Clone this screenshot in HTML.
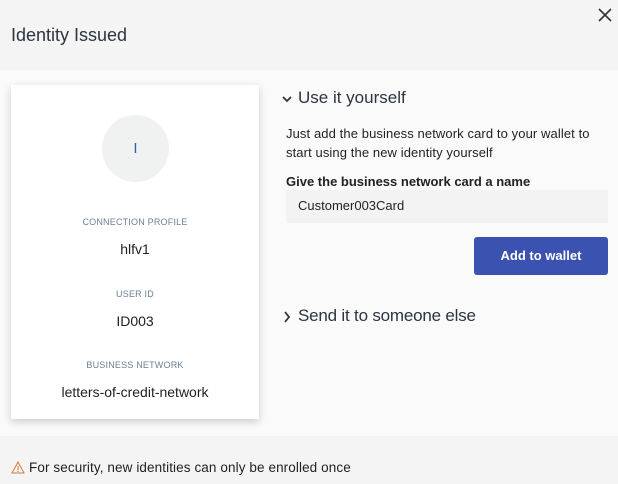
<!DOCTYPE html>
<html><head><style>
*{margin:0;padding:0;box-sizing:border-box}
body{width:618px;height:484px;overflow:hidden;font-family:"Liberation Sans",sans-serif;background:#fafafa;position:relative;color:#222}
.hdr{position:absolute;left:0;top:0;width:618px;height:70px;background:#f4f4f4}
.ftr{position:absolute;left:0;top:436px;width:618px;height:48px;background:#f4f4f4}
.abs{position:absolute;white-space:nowrap}
.card{position:absolute;left:11px;top:85px;width:248px;height:334px;background:#fff;box-shadow:0 3px 8px rgba(0,0,0,.18)}
.circ{position:absolute;left:102px;top:115px;width:67px;height:67px;border-radius:50%;background:#f0f1f1;color:#3d5ab0;text-align:center;line-height:67px;font-size:15px}
.lbl{position:absolute;left:11px;width:248px;text-align:center;font-size:9px;color:#6b7f96;letter-spacing:.2px}
.val{position:absolute;left:11px;width:248px;text-align:center;font-size:14px;color:#222}
</style></head><body>
<div class="hdr"></div><div class="ftr"></div>
<div class="abs" style="left:11px;top:25px;font-size:18px;color:#2d3340">Identity Issued</div>
<svg class="abs" style="left:598px;top:8px" width="14" height="14"><path d="M1 1L13 13M13 1L1 13" stroke="#333" stroke-width="1.6"/></svg>
<div class="card"></div>
<div class="circ">I</div>
<div class="lbl" style="top:217px">CONNECTION PROFILE</div>
<div class="val" style="top:241px">hlfv1</div>
<div class="lbl" style="top:289px">USER ID</div>
<div class="val" style="top:313px">ID003</div>
<div class="lbl" style="top:360px">BUSINESS NETWORK</div>
<div class="val" style="top:384px">letters-of-credit-network</div>
<svg class="abs" style="left:282px;top:95px" width="10" height="8"><path d="M1 2L5 6L9 2" stroke="#333" stroke-width="1.8" fill="none"/></svg>
<div class="abs" style="left:298px;top:88px;font-size:17px;color:#2d3340">Use it yourself</div>
<div class="abs" style="left:286px;top:124px;font-size:13px;line-height:19px;color:#222;letter-spacing:.1px">Just add the business network card to your wallet to<br>start using the new identity yourself</div>
<div class="abs" style="left:286px;top:174px;font-size:13px;font-weight:bold;color:#222">Give the business network card a name</div>
<div class="abs" style="left:286px;top:190px;width:322px;height:33px;background:#f3f3f3"></div>
<div class="abs" style="left:298px;top:198px;font-size:13px;color:#222">Customer003Card</div>
<div class="abs" style="left:474px;top:237px;width:134px;height:38px;background:#3c52b0;border-radius:3px;color:#fff;font-size:13px;font-weight:bold;text-align:center;line-height:38px">Add to wallet</div>
<svg class="abs" style="left:283px;top:311px" width="8" height="12"><path d="M2 1L6 6L2 11" stroke="#333" stroke-width="1.8" fill="none"/></svg>
<div class="abs" style="left:298px;top:306px;font-size:17px;color:#2d3340;letter-spacing:-.2px">Send it to someone else</div>
<svg class="abs" style="left:11px;top:461px" width="14" height="13"><path d="M7 1L13 12H1Z" stroke="#d07a3a" stroke-width="1" fill="none"/><path d="M7 5V9M7 10V11" stroke="#d07a3a" stroke-width="1"/></svg>
<div class="abs" style="left:29px;top:460px;font-size:13.5px;color:#222;letter-spacing:.1px">For security, new identities can only be enrolled once</div>
</body></html>
